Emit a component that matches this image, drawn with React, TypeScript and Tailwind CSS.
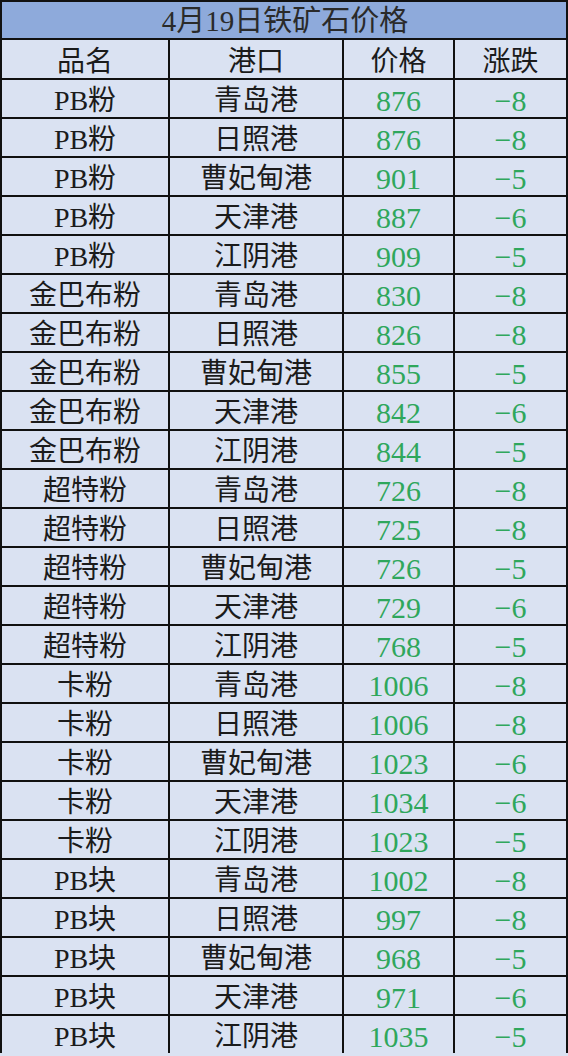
const rows: [string, string, string, string][] = [
  ['PB粉', '青岛港', '876', '-8'],
  ['PB粉', '日照港', '876', '-8'],
  ['PB粉', '曹妃甸港', '901', '-5'],
  ['PB粉', '天津港', '887', '-6'],
  ['PB粉', '江阴港', '909', '-5'],
  ['金巴布粉', '青岛港', '830', '-8'],
  ['金巴布粉', '日照港', '826', '-8'],
  ['金巴布粉', '曹妃甸港', '855', '-5'],
  ['金巴布粉', '天津港', '842', '-6'],
  ['金巴布粉', '江阴港', '844', '-5'],
  ['超特粉', '青岛港', '726', '-8'],
  ['超特粉', '日照港', '725', '-8'],
  ['超特粉', '曹妃甸港', '726', '-5'],
  ['超特粉', '天津港', '729', '-6'],
  ['超特粉', '江阴港', '768', '-5'],
  ['卡粉', '青岛港', '1006', '-8'],
  ['卡粉', '日照港', '1006', '-8'],
  ['卡粉', '曹妃甸港', '1023', '-6'],
  ['卡粉', '天津港', '1034', '-6'],
  ['卡粉', '江阴港', '1023', '-5'],
  ['PB块', '青岛港', '1002', '-8'],
  ['PB块', '日照港', '997', '-8'],
  ['PB块', '曹妃甸港', '968', '-5'],
  ['PB块', '天津港', '971', '-6'],
  ['PB块', '江阴港', '1035', '-5'],
];

const cell = 'bg-[#dae2f2] flex items-center justify-center h-[37px] leading-none pt-[4px]';

export default function App() {
  return (
    <div className="w-[568px] h-[1056px] overflow-hidden bg-[#dae2f2] font-['Liberation_Serif','Noto_Sans_CJK_SC',serif] text-[28px] text-[#1b1b1b]">
      <div className="grid grid-cols-[166px_172px_109px_111px] gap-[2px] bg-[#111] p-[2px] pb-0">
        <div className="col-span-4 bg-[#8eaadb] h-[36px] flex items-center justify-center leading-none pl-[2px] pt-[2px] text-[29px] text-[#2a2a2a]">
          4月19日铁矿石价格
        </div>
        {['品名', '港口', '价格', '涨跌'].map((h) => (
          <div key={h} className="bg-[#dae2f2] flex items-center justify-center h-[38px] leading-none pt-[6px]">
            {h}
          </div>
        ))}
        {rows.map((r, i) => (
          <div key={i} className="contents">
            <div className={cell}>{r[0]}</div>
            <div className={cell}>{r[1]}</div>
            <div className={`${cell} text-[#2fa75c] text-[30px]`}>{r[2]}</div>
            <div className={`${cell} text-[#2fa75c] text-[30px]`}>{r[3].replace('-', '\u2212')}</div>
          </div>
        ))}
      </div>
    </div>
  );
}
